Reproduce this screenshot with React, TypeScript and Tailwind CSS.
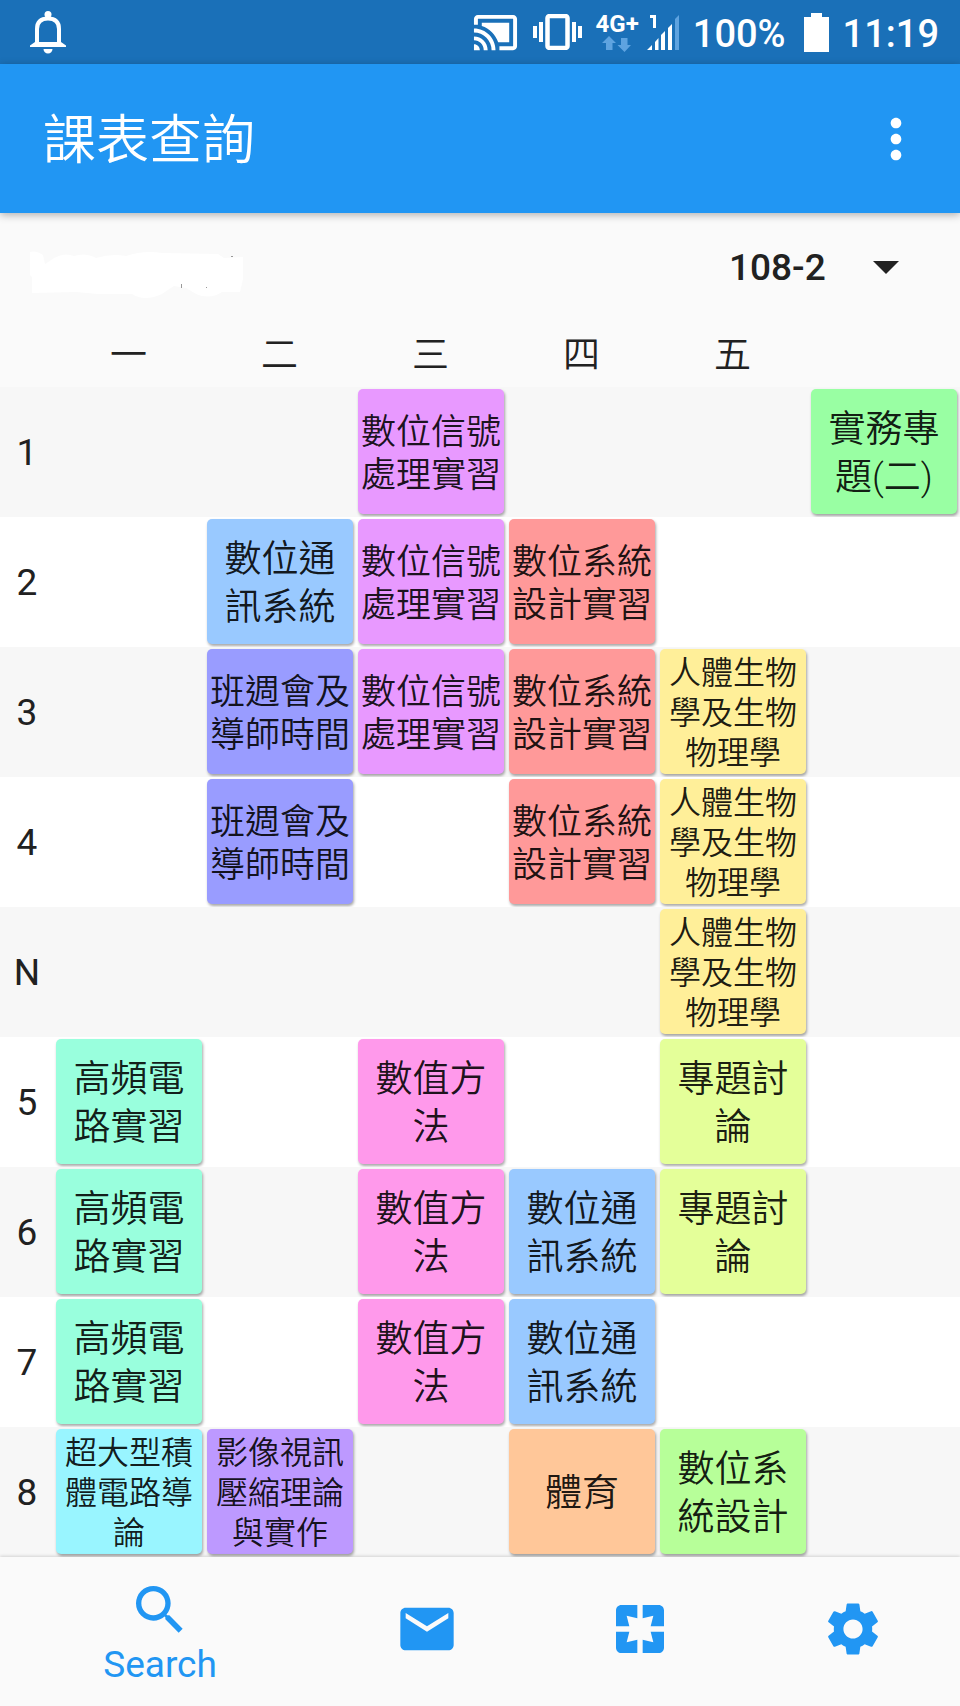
import { MdCastConnected, MdMail, MdMoreVert, MdPages, MdSearch, MdSettings } from "react-icons/md";

type Course = { name: string; color: string; size?: string };

const LARGE = "pt-[5px] text-[37px] leading-[48px]";
const MEDIUM = "pt-[5px] text-[35px] leading-[43px]";
const SMALL = "pt-[3px] text-[32px] leading-[40px]";

const signalLab: Course = { name: "數位信號處理實習", color: "bg-[#e899ff]", size: MEDIUM };
const project: Course = { name: "實務專題(二)", color: "bg-[#99ffa3]" };
const comms: Course = { name: "數位通訊系統", color: "bg-[#99c9ff]" };
const systemLab: Course = { name: "數位系統設計實習", color: "bg-[#ff9999]", size: MEDIUM };
const classMeeting: Course = { name: "班週會及導師時間", color: "bg-[#999cff]", size: MEDIUM };
const biology: Course = { name: "人體生物學及生物物理學", color: "bg-[#ffef99]", size: SMALL };
const rfLab: Course = { name: "高頻電路實習", color: "bg-[#99ffdd]" };
const numerical: Course = { name: "數值方法", color: "bg-[#ff99eb]" };
const seminar: Course = { name: "專題討論", color: "bg-[#e4ff99]" };
const vlsi: Course = { name: "超大型積體電路導論", color: "bg-[#99f5ff]", size: SMALL };
const imaging: Course = { name: "影像視訊壓縮理論與實作", color: "bg-[#bd99ff]", size: SMALL };
const sports: Course = { name: "體育", color: "bg-[#ffc799]" };
const systemDesign: Course = { name: "數位系統設計", color: "bg-[#b7ff99]" };

const days = ["一", "二", "三", "四", "五", ""];

const periods: { label: string; cells: (Course | null)[] }[] = [
  { label: "1", cells: [null, null, signalLab, null, null, project] },
  { label: "2", cells: [null, comms, signalLab, systemLab, null, null] },
  { label: "3", cells: [null, classMeeting, signalLab, systemLab, biology, null] },
  { label: "4", cells: [null, classMeeting, null, systemLab, biology, null] },
  { label: "N", cells: [null, null, null, null, biology, null] },
  { label: "5", cells: [rfLab, null, numerical, null, seminar, null] },
  { label: "6", cells: [rfLab, null, numerical, comms, seminar, null] },
  { label: "7", cells: [rfLab, null, numerical, comms, null, null] },
  { label: "8", cells: [vlsi, imaging, null, sports, systemDesign, null] },
];

function StatusBar() {
  return (
    <div className="flex h-16 items-center bg-[#1a70b8] pr-[21px] pl-[30px] text-[38px] leading-[40px] text-white">
      <svg className="mr-auto h-[43px] w-9" viewBox="0 0 36 43" fill="none" aria-hidden="true">
        <path d="M7 33V18C7 10 12 7.500 18 7.500S29 10 29 18V33" stroke="currentColor" strokeWidth="4" />
        <circle cx="18" cy="3.500" r="3.500" fill="currentColor" />
        <path d="M5 31H31L36 34.500V36H0V34.500ZM13.500 38H22.500A4.500 4.500 0 0 1 13.500 38Z" fill="currentColor" />
      </svg>
      <MdCastConnected className="size-[47px]" aria-hidden="true" />
      <svg className="ml-3.5 h-9 w-[49px]" viewBox="0 0 49 36" fill="none" aria-hidden="true">
        <rect x="14.500" y="2" width="20" height="32" rx="2" stroke="currentColor" strokeWidth="4.500" />
        <path d="M0 12H4V24H0ZM6 8H10V28H6ZM39 8H43V28H39ZM45 12H49V24H45Z" fill="currentColor" />
      </svg>
      <div className="ml-3.5 flex h-10 flex-col items-center">
        <span className="text-[24px] leading-6 font-bold">4G+</span>
        <svg className="h-4 w-8" viewBox="0 0 32 16" fill="#5ea3e0" aria-hidden="true">
          <path d="M8 0L15 7H11.500V14H5V7H1ZM20 2H26.500V9H30L23.500 16L16.500 9H20Z" />
        </svg>
      </div>
      <svg className="ml-2 h-[35px] w-8" viewBox="0 0 32 35" fill="currentColor" aria-hidden="true">
        <path d="M3 0H9V13H6V3H3Z" />
        <path d="M0 35L5 30V35ZM8 27L11.500 23V35H8ZM14 20L18 16V35H14ZM21 13L25 9V35H21Z" />
        <path d="M28 4L32 0V35H28Z" fill="#5ea3e0" />
      </svg>
      <span className="ml-3.5 pt-[3px] font-medium">100%</span>
      <svg className="ml-[18px] h-[39px] w-[25px]" viewBox="0 0 25 39" fill="currentColor" aria-hidden="true">
        <path d="M7 0H18V4H25V39H0V4H7Z" />
      </svg>
      <span className="ml-3.5 pt-[3px] font-medium">11:19</span>
    </div>
  );
}

function CourseCard({ course }: { course: Course }) {
  return (
    <div
      className={`flex h-[125px] items-center justify-center rounded-[5px] px-[2px] text-center font-[350] break-all text-black/90 shadow-[1px_2px_3px_rgba(0,0,0,0.35)] ${course.color} ${course.size ?? LARGE}`}
    >
      {course.name}
    </div>
  );
}

export default function App() {
  return (
    <div className="flex min-h-screen flex-col bg-[#fafafa] font-[Roboto,'Noto_Sans_CJK_TC',sans-serif] text-[#212121]" lang="zh-Hant">
      <StatusBar />
      <header className="relative flex h-[149px] items-center justify-between bg-[#2196f3] pr-8 pl-[43px] text-white shadow-[0_2px_8px_rgba(0,0,0,0.3)]">
        <h1 className="pt-1 text-[53px] leading-[64px] font-[350]">課表查詢</h1>
        <button type="button" aria-label="More options">
          <MdMoreVert className="size-16" />
        </button>
      </header>

      <main className="grow">
        <div className="flex h-[109px] items-center justify-between pr-[61px] pl-7">
          <svg className="mt-4 h-[52px] w-[216px]" viewBox="0 0 216 52" fill="#ffffff" aria-hidden="true">
            <path d="M2 2Q8 0 15 5L17 14L26 8Q36 2 46 6Q58 2 68 8Q84 3 98 6Q116 0 134 3L190 4L196 8L215 7V29L212 42H194Q182 50 168 44L158 38L146 36L134 44Q116 52 104 44L70 44L48 42L4 43V27L2 25Z" />
            <path d="M153 34H154V38H153ZM178 37H179V38H178ZM203 6H205V7H203Z" fill="#999999" />
          </svg>
          <div className="relative flex items-center">
            <select
              aria-label="Semester"
              className="w-[170px] appearance-none bg-transparent text-[37px] leading-[48px] font-medium outline-none"
              defaultValue="108-2"
            >
              <option>108-2</option>
            </select>
            <svg className="pointer-events-none absolute right-0 h-[13px] w-[26px]" viewBox="0 0 26 13" fill="currentColor" aria-hidden="true">
              <path d="M0 0H26L13 13Z" />
            </svg>
          </div>
        </div>

        <table className="w-full table-fixed border-collapse">
          <colgroup>
            <col className="w-[54px]" />
            {days.map((_, i) => (
              <col key={i} />
            ))}
          </colgroup>
          <thead>
            <tr className="h-[65px]">
              <td />
              {days.map((day, i) => (
                <th key={i} scope="col" className="pt-[2px] pr-[2px] pb-0 pl-0 text-[37px] leading-[43px] font-[350]">
                  {day}
                </th>
              ))}
            </tr>
          </thead>
          <tbody>
            {periods.map((period) => (
              <tr key={period.label} className="h-[130px] odd:bg-[#f7f7f7] even:bg-white">
                <th scope="row" className="px-0 pt-[2px] pb-0 text-[37px] leading-[48px] font-normal">
                  {period.label}
                </th>
                {period.cells.map((course, i) => (
                  <td key={i} className="pt-[2px] pr-[3px] pb-[3px] pl-[2px]">
                    {course && <CourseCard course={course} />}
                  </td>
                ))}
              </tr>
            ))}
          </tbody>
        </table>
      </main>

      <nav className="relative grid h-[149px] grid-cols-[3fr_2fr_2fr_2fr] bg-[#fafafa] text-[#2196f3] shadow-[0_-1px_3px_rgba(0,0,0,0.15)]">
        <button type="button" className="flex flex-col items-center pt-[21px]">
          <MdSearch className="size-16" aria-hidden="true" />
          <span className="text-[37px] leading-[45px]">Search</span>
        </button>
        <button type="button" aria-label="Mail" className="flex flex-col items-center pt-10">
          <MdMail className="size-16" />
        </button>
        <button type="button" aria-label="Pages" className="flex flex-col items-center pt-10">
          <MdPages className="size-16" />
        </button>
        <button type="button" aria-label="Settings" className="flex flex-col items-center pt-10">
          <MdSettings className="size-16" />
        </button>
      </nav>
    </div>
  );
}
